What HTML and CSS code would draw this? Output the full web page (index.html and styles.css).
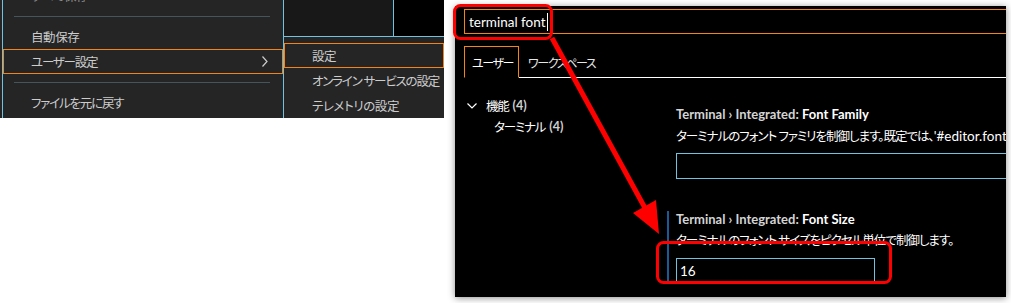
FILE: index.html
```html
<!DOCTYPE html>
<html>
<head>
    <title>ユーザー設定 - ターミナル フォント</title>
    <link rel="stylesheet" href="styles.css">
</head>
<body>
    <div class="canvas">
        <div class="menu-shot">
            <div class="menu">
                <div class="menu-item cut">すべて保存<span class="key">Ctrl+K S</span></div>
                <div class="separator"></div>
                <div class="menu-item">自動保存</div>
                <div class="menu-item active narrow">ユーザー設定
                    <svg class="chevron" width="6" height="11" viewBox="0 0 6 11">
                        <polyline points="0.5,0.5 5,5.5 0.5,10.5" fill="none" stroke="#cccccc" stroke-width="1.2"/>
                    </svg>
                </div>
                <div class="separator"></div>
                <div class="menu-item narrow">ファイルを元に戻す</div>
            </div>
            <div class="side">
                <div class="editor-strip">
                    <div class="strip-dark"></div>
                    <div class="strip-black"></div>
                </div>
                <div class="submenu">
                    <div class="menu-item active">設定</div>
                    <div class="menu-item narrow">オンライン サービスの設定</div>
                    <div class="menu-item">テレメトリの設定</div>
                </div>
            </div>
        </div>

        <div class="settings-shot">
            <div class="search">
                <span class="query">terminal font</span><span class="caret"></span>
            </div>
            <div class="tabs">
                <div class="tab active">ユーザー</div>
                <div class="tab">ワークスペース</div>
            </div>
            <div class="settings-body">
                <div class="toc">
                    <div class="toc-group">
                        <svg class="toc-chevron" width="10" height="6" viewBox="0 0 10 6">
                            <polyline points="0.5,0.5 5,5 9.5,0.5" fill="none" stroke="#ffffff" stroke-width="1.2"/>
                        </svg>
                        <span class="jp">機能</span><span class="count">(4)</span>
                    </div>
                    <div class="toc-item"><span class="jp">ターミナル</span><span class="count">(4)</span></div>
                </div>
                <div class="list">
                    <div class="setting">
                        <div class="setting-title"><span class="category">Terminal › Integrated: </span>Font Family</div>
                        <div class="setting-desc">ターミナルのフォント ファミリを制御します。既定では、<span class="latin">'#editor.fontFamily#'</span> の値になります。</div>
                        <div class="setting-input wide"></div>
                    </div>
                    <div class="setting focused">
                        <div class="setting-title"><span class="category">Terminal › Integrated: </span>Font Size</div>
                        <div class="setting-desc">ターミナルのフォント サイズをピクセル単位で制御します。</div>
                        <div class="setting-input short">16</div>
                    </div>
                </div>
            </div>
        </div>

        <!-- red annotations drawn over both screenshots -->
        <svg class="annotations" width="1011" height="303" viewBox="0 0 1011 303">
            <rect x="454.5" y="5.5" width="97" height="33" rx="6" fill="none" stroke="#ff0000" stroke-width="3"/>
            <rect x="657.5" y="242.5" width="233" height="40" rx="6" fill="none" stroke="#ff0000" stroke-width="3"/>
            <line x1="552" y1="38" x2="645" y2="208" stroke="#ff0000" stroke-width="5"/>
            <polygon points="659,234 633,213 656,200" fill="#ff0000"/>
        </svg>
    </div>
</body>
</html>
```

FILE: styles.css
```css
body {
    margin: 0;
    background: #ffffff;
    font-family: Lato, "Noto Sans CJK JP", sans-serif;
    font-feature-settings: "palt" 1;
}
.canvas {
    position: relative;
    display: flex;
    align-items: flex-start;
    width: 1011px;
    height: 303px;
    overflow: hidden;
}

/* left screenshot: file menu */
.menu-shot {
    display: flex;
    flex-shrink: 0;
    width: 444px;
    height: 118px;
    background: #252526;
    overflow: hidden;
}
.menu {
    flex-shrink: 0;
    width: 280px;
    margin-left: 2px;
    border-left: 1px solid #6fc3df;
    border-right: 1px solid #6fc3df;
}
.side {
    flex: 1;
    min-width: 0;
    display: flex;
    flex-direction: column;
}
.editor-strip {
    display: flex;
    height: 43px;
}
.strip-dark {
    width: 109px;
    background: #181818;
    border-right: 1px solid #6fc3df;
}
.strip-black {
    flex: 1;
    background: #000000;
}
.submenu {
    flex: 1;
    border-top: 1px solid #6fc3df;
    padding-top: 6px;
}
.menu-item {
    display: flex;
    align-items: center;
    height: 25px;
    box-sizing: border-box;
    border: 1px solid transparent;
    padding-left: 27px;
    font-size: 12.5px;
    letter-spacing: -0.4px;
    color: #cccccc;
    white-space: nowrap;
}
.menu-item.narrow {
    letter-spacing: -1.2px;
}
.menu-item.active {
    border-color: #f38518;
}
.menu-item.cut {
    margin-top: -17px;
    color: #8b8b8b;
}
.key {
    margin-left: auto;
    margin-right: 26px;
    letter-spacing: 0;
}
.chevron {
    margin-left: auto;
    margin-right: 14px;
}
.separator {
    height: 1px;
    margin: 8px 13px 7px 11px;
    background: #46545c;
}

/* right screenshot: settings editor */
.settings-shot {
    flex-shrink: 0;
    width: 551px;
    height: 291px;
    margin: 6px 0 0 11px;
    background: #000000;
    color: #ffffff;
    box-shadow: 0 1px 7px rgba(0,0,0,0.45);
    overflow: hidden;
}
.search {
    display: flex;
    align-items: center;
    height: 25px;
    margin: 3px -20px 0 9px;
    padding-left: 4px;
    border: 1px solid #f38518;
    box-sizing: border-box;
    font-size: 13.5px;
}
.caret {
    width: 1px;
    height: 18px;
    margin-left: 1px;
    background: #ffffff;
}
.tabs {
    display: flex;
    margin: 12px 0 0 9px;
    border-bottom: 1px solid #ffffff;
}
.tab {
    display: flex;
    align-items: center;
    height: 32px;
    padding: 0 8px;
    box-sizing: border-box;
    border: 1px solid transparent;
    margin-bottom: -1px;
    font-size: 12px;
    letter-spacing: -1.4px;
    color: #e6e6e6;
}
.tab.active {
    border-color: #f38518;
    border-bottom-color: #000000;
    color: #ffffff;
    padding: 0 5px 0 7px;
}
.settings-body {
    display: flex;
}
.toc {
    flex-shrink: 0;
    width: 212px;
    padding: 17px 0 0 12px;
    box-sizing: border-box;
    font-size: 13px;
}
.toc-group,
.toc-item {
    display: flex;
    align-items: center;
    gap: 4px;
    height: 21px;
}
.toc-chevron {
    margin-right: 5px;
}
.toc-item {
    padding-left: 27px;
}
.jp {
    font-size: 12.5px;
    letter-spacing: -1.2px;
}
.count {
    color: #cfcfcf;
    font-size: 12.5px;
    font-weight: bold;
}
.list {
    flex: 1;
    min-width: 0;
    padding-top: 28px;
}
.setting {
    padding-left: 7px;
    border-left: 2px solid transparent;
    margin-bottom: 32px;
    white-space: nowrap;
}
.setting.focused {
    border-left-color: #1b5a96;
}
.setting-title {
    height: 16px;
    line-height: 16px;
    font-size: 13px;
    font-weight: bold;
}
.category {
    color: #d4d4d4;
}
.setting-desc {
    height: 18px;
    line-height: 18px;
    margin-top: 5px;
    font-size: 12.5px;
    letter-spacing: -1px;
}
.latin {
    font-size: 13.5px;
    letter-spacing: 0;
}
.setting-input {
    height: 26px;
    margin-top: 8px;
    padding-left: 3px;
    border: 1px solid #6fc3df;
    box-sizing: border-box;
    line-height: 24px;
    font-size: 13.5px;
}
.setting-input.wide {
    width: 400px;
}
.setting-input.short {
    width: 199px;
}

.annotations {
    position: absolute;
    top: 0;
    left: 0;
    pointer-events: none;
}
```
